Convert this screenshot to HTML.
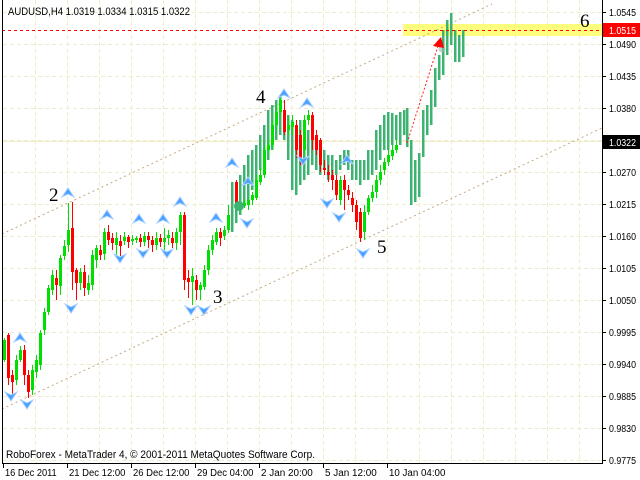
<!DOCTYPE html>
<html><head><meta charset="utf-8">
<style>
html,body{margin:0;padding:0;background:#fff;}
svg{display:block;font-family:"Liberation Sans",sans-serif;}
</style></head>
<body>
<svg id="c" width="640" height="480" viewBox="0 0 640 480" xmlns="http://www.w3.org/2000/svg">
<rect width="640" height="480" fill="#fff"/>
<g id="grid" stroke="#efeccb" stroke-width="1" stroke-dasharray="4,3"></g>
<rect x="403" y="24" width="199" height="12" fill="#ffff66" opacity="0.85"/>
<line x1="2" y1="141.5" x2="602" y2="141.5" stroke="#f2efc8" stroke-width="1"/>
<g stroke="#c8a882" stroke-width="1" stroke-dasharray="2,3" fill="none">
<line x1="2" y1="234" x2="492" y2="4"/>
<line x1="2" y1="409" x2="602" y2="128"/>
</g>
<g id="bars"></g>
<g id="cand"></g>
<circle cx="239" cy="206" r="5" fill="#3cb371"/>
<circle cx="442" cy="49" r="3.5" fill="#9ab8b0" opacity="0.6"/>
<line x1="407" y1="143" x2="438" y2="46" stroke="#ff2020" stroke-width="1" stroke-dasharray="2,2"/>
<polygon points="441,37 433,46 444,48" fill="#ff0000"/>
<line x1="2" y1="30.5" x2="602" y2="30.5" stroke="#ff0000" stroke-width="1" stroke-dasharray="3,3"/>
<g id="arr"></g>
<g font-family="'Liberation Serif',serif" font-size="19" fill="#000">
<text x="49" y="201">2</text><text x="256" y="103">4</text><text x="213" y="303">3</text><text x="377" y="253">5</text><text x="580" y="27">6</text>
</g>
<line x1="2.5" y1="0" x2="2.5" y2="463" stroke="#000"/>
<line x1="602.5" y1="0" x2="602.5" y2="463" stroke="#000"/>
<line x1="2" y1="463.5" x2="603" y2="463.5" stroke="#000"/>
<g id="ax" font-size="10" fill="#000"></g>
<text x="8" y="15" font-size="11" fill="#000" textLength="182" lengthAdjust="spacingAndGlyphs">AUDUSD,H4  1.0319 1.0334 1.0315 1.0322</text>
<text x="6" y="458" font-size="11" fill="#000" textLength="309" lengthAdjust="spacingAndGlyphs">RoboForex - MetaTrader 4, © 2001-2011 MetaQuotes Software Corp.</text>
</svg>
<script>
var NS="http://www.w3.org/2000/svg";
function el(p,t,a,txt){var e=document.createElementNS(NS,t);for(var k in a)e.setAttribute(k,a[k]);if(txt!==undefined)e.textContent=txt;document.getElementById(p).appendChild(e);return e;}
var gy=[12,44,76,108,140,172,204,236,268,300,332,364,396,428,460];
gy.forEach(function(y){el("grid","line",{x1:3,y1:y+.5,x2:602,y2:y+.5});});
for(var x=35;x<602;x+=32)el("grid","line",{x1:x+.5,y1:0,x2:x+.5,y2:463});
var pl=[["1.0545",12],["1.0490",44],["1.0435",76],["1.0380",108],["1.0270",172],["1.0215",204],["1.0160",236],["1.0105",268],["1.0050",300],["0.9995",332],["0.9940",364],["0.9885",396],["0.9830",428],["0.9775",460]];
pl.forEach(function(p){el("ax","line",{x1:602,y1:p[1]+.5,x2:606,y2:p[1]+.5,stroke:"#000"});el("ax","text",{x:609,y:p[1]+4,textLength:27,lengthAdjust:"spacingAndGlyphs"},p[0]);});
el("ax","rect",{x:603,y:23,width:37,height:14,fill:"#ff0000"});
el("ax","text",{x:609,y:34,fill:"#fff",textLength:27,lengthAdjust:"spacingAndGlyphs"},"1.0515");
el("ax","rect",{x:603,y:135,width:37,height:14,fill:"#000"});
el("ax","text",{x:609,y:146,fill:"#fff",textLength:27,lengthAdjust:"spacingAndGlyphs"},"1.0322");
var tl=[[3,"16 Dec 2011"],[67,"21 Dec 12:00"],[131,"26 Dec 12:00"],[195,"29 Dec 04:00"],[259,"2 Jan 20:00"],[323,"5 Jan 12:00"],[387,"10 Jan 04:00"]];
tl.forEach(function(t){el("ax","line",{x1:t[0]+.5,y1:463,x2:t[0]+.5,y2:468,stroke:"#000"});el("ax","text",{x:t[0]+2,y:476,textLength:t[1].length*4.7,lengthAdjust:"spacingAndGlyphs"},t[1]);});
var sb=[[232,182,232],[236,183,223],[240,175,215],[244,165,205],[248,155,200],[252,150,190],[256,145,180],[260,135,170],[264,125,165],[268,110,160],[272,105,150],[276,100,140],[280,95,135],[284,110,140],[288,115,160],[292,120,190],[296,135,195],[300,120,185],[304,125,180],[308,130,175],[312,130,165],[316,140,170],[320,150,175],[324,150,170],[328,155,180],[332,155,175],[336,160,175],[340,155,170],[344,150,165],[348,150,170],[352,160,180],[356,160,180],[360,160,185],[364,160,180],[368,150,180],[372,150,175],[376,130,170],[380,125,160],[384,115,150],[388,112,150],[392,113,145],[396,115,140],[400,112,145],[404,110,135],[407,108,147],[411,140,205],[415,160,202],[419,153,197],[423,110,157],[427,105,135],[431,90,125],[435,68,107],[439,55,80],[443,30,75],[447,20,55],[451,13,45],[455,30,62],[459,35,62],[463,30,57]];
sb.forEach(function(b){el("bars","rect",{x:b[0]-1,y:b[1],width:2.5,height:b[2]-b[1],fill:"#3cb371"});});
var cd=[[4,360,340,338,362],[8,335,378,333,385],[12,375,382,370,395],[16,380,360,355,385],[20,360,350,346,362],[24,350,375,345,385],[28,375,392,370,398],[32,390,370,365,395],[36,372,360,355,378],[40,365,333,330,370],[44,330,312,308,335],[48,312,288,285,315],[52,290,275,270,295],[56,278,285,270,300],[60,286,258,255,295],[64,256,246,240,260],[68,245,230,203,252],[72,228,272,202,290],[76,270,283,268,300],[80,283,272,268,290],[84,272,288,265,296],[88,290,283,275,295],[92,285,255,250,290],[96,260,248,245,268],[100,250,255,245,260],[104,254,232,228,260],[108,232,240,225,245],[112,238,243,233,250],[116,245,238,232,255],[120,241,246,235,256],[124,241,237,232,245],[128,237,242,235,248],[132,241,239,235,245],[136,240,238,236,243],[140,238,242,234,247],[144,242,236,232,246],[148,236,240,232,248],[152,240,245,236,252],[156,245,238,232,250],[160,238,242,234,247],[164,242,238,228,250],[168,238,235,230,245],[172,238,243,232,248],[176,243,232,228,250],[180,232,215,212,245],[184,215,280,212,290],[188,278,282,270,298],[192,282,276,268,305],[196,280,290,275,300],[200,290,285,282,300],[204,287,270,265,290],[208,270,250,245,275],[212,250,240,235,255],[216,242,232,228,245],[220,232,238,228,246],[224,236,230,226,240],[228,230,215,205,233],[236,182,205,180,210],[240,208,206,203,212],[244,206,203,200,208],[248,205,200,198,210],[252,200,195,192,205],[256,198,180,175,200],[260,182,175,168,185],[264,175,150,145,178],[268,150,145,140,155],[272,145,125,120,150],[276,125,112,105,130],[280,112,100,95,118],[284,110,132,100,135],[288,130,125,118,135],[292,127,122,115,135],[296,125,150,120,158],[300,135,160,130,165],[304,150,120,115,155],[308,120,115,110,125],[312,115,140,112,150],[316,135,150,130,155],[320,140,165,138,172],[324,168,170,160,175],[328,172,175,165,182],[332,175,180,170,190],[336,180,195,175,200],[340,200,180,176,205],[344,180,190,175,210],[348,190,195,185,200],[352,198,205,192,212],[356,205,222,200,230],[360,212,238,208,242],[364,232,212,205,240],[368,212,198,195,215],[372,198,192,185,202],[376,192,180,175,198],[380,180,172,165,185],[384,170,162,158,175],[388,162,155,150,166],[392,156,150,145,160],[396,150,145,140,153]];
cd.forEach(function(c){var up=c[2]<c[1];var col=up?"#00e000":"#ff0000";
el("cand","line",{x1:c[0]+.5,y1:c[3],x2:c[0]+.5,y2:c[4],stroke:col});
var t=Math.min(c[1],c[2]),b=Math.max(c[1],c[2]);if(b-t<1)b=t+1;
el("cand","rect",{x:c[0]-1,y:t,width:3,height:b-t,fill:col});});
var ups=[[20,338],[68,193],[107,215],[139,219],[163,219],[180,202],[216,218],[232,163],[248,182],[284,94],[307,103],[347,160]];
var dns=[[11,396],[27,404],[71,308],[120,258],[143,253],[167,253],[191,310],[204,310],[247,223],[303,160],[327,203],[339,217],[363,253]];
ups.forEach(function(p){var x=p[0],y=p[1];el("arr","path",{d:"M"+x+","+(y-5)+" L"+(x+6)+","+(y+4)+" L"+x+","+(y+1)+" L"+(x-6)+","+(y+4)+"Z",fill:"#4aa0ff",stroke:"#a8d0ff","stroke-width":1});});
dns.forEach(function(p){var x=p[0],y=p[1];el("arr","path",{d:"M"+x+","+(y+5)+" L"+(x+6)+","+(y-4)+" L"+x+","+(y-1)+" L"+(x-6)+","+(y-4)+"Z",fill:"#4aa0ff",stroke:"#a8d0ff","stroke-width":1});});
</script>
</body></html>
